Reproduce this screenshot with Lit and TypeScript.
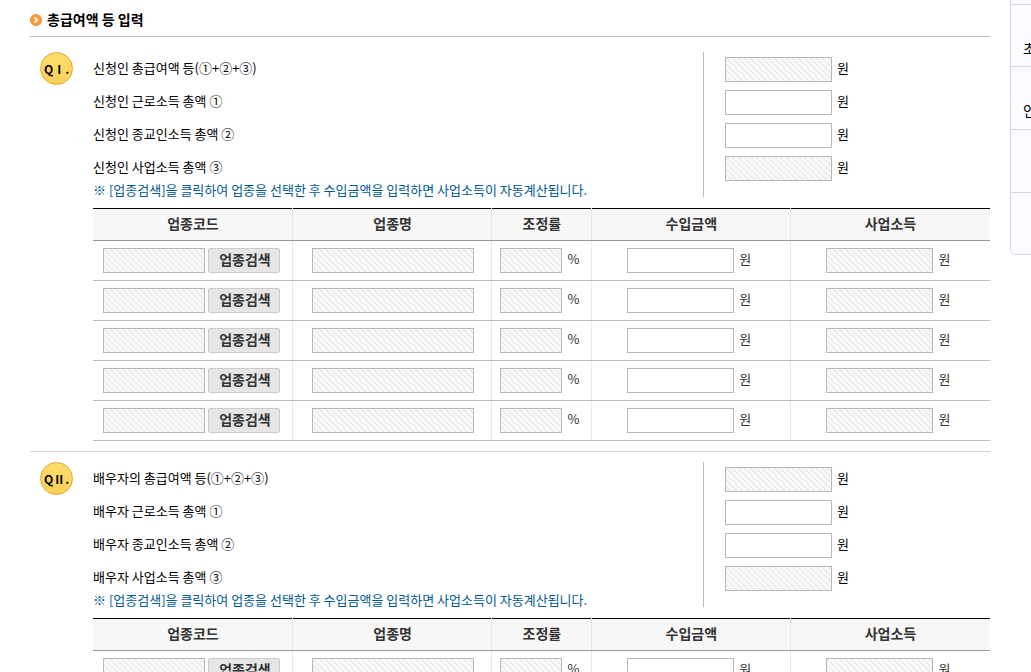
import { LitElement, html, css } from "lit";
import { customElement, property } from "lit/decorators.js";

const FIELDS = [
  { key: "total", suffix: "총급여액 등(①+②+③)", locked: true },
  { key: "wage", suffix: "근로소득 총액 ①", locked: false },
  { key: "clergy", suffix: "종교인소득 총액 ②", locked: false },
  { key: "business", suffix: "사업소득 총액 ③", locked: true },
];

const COLUMNS = [
  { name: "업종코드", cls: "first" },
  { name: "업종명", cls: "wide" },
  { name: "조정률", cls: "narrow" },
  { name: "수입금액", cls: "wide" },
  { name: "사업소득", cls: "last" },
];

@customElement("income-section")
export class IncomeSection extends LitElement {
  @property() mark = "";
  @property() who = "";
  @property() whoTotal = "";

  static styles = css`
    :host {
      display: grid;
      grid-template-columns: 33px minmax(0, 1fr);
      column-gap: 20px;
      padding: 10px 0 10px 10px;
      border-bottom: 1px solid #d4d4d4;
    }
    * { box-sizing: border-box; }
    .badge {
      display: flex;
      align-items: center;
      justify-content: center;
      width: 33px;
      height: 33px;
      border: 1px solid #dba92f;
      border-radius: 50%;
      background: linear-gradient(#ffdd6c, #fad057);
      font-size: 12px;
      font-weight: 700;
      color: #000;
      white-space: nowrap;
    }
    .summary {
      display: grid;
      grid-template-columns: 68% 32%;
      margin-bottom: 11px;
    }
    .labels label { display: block; padding-bottom: 2px; line-height: 31px; color: #000; }
    .note { margin: 0; line-height: 12px; height: 12px; color: #005a92; }
    .values { border-left: 1px solid #bbb; padding: 1px 0 12px 21px; }
    .value { display: flex; align-items: center; gap: 5px; height: 33px; color: #000; }
    input {
      height: 25px;
      margin: 0;
      padding: 0 5px;
      border: 1px solid #b8b8b8;
      border-radius: 0;
      background: #fff;
      font: inherit;
      text-align: right;
    }
    input[readonly] {
      background: linear-gradient(45deg, transparent 45%, #e2e2e2 45% 55%, transparent 55%) 0 0 / 6px 6px #f8f8f8;
    }
    .money { width: 107px; }
    .code { width: 102px; }
    .trade { width: 162px; }
    .rate { width: 62px; }
    .unit { padding-bottom: 3px; }
    .cell .unit { width: 16px; }
    table { width: 100%; table-layout: fixed; border-collapse: separate; border-spacing: 0; color: #333; }
    th, td { padding: 0; }
    th {
      height: 33px;
      padding-bottom: 3px;
      border-bottom: 1px solid #999;
      background:
        linear-gradient(#e9e9e9, #e9e9e9) right / 1px 100% no-repeat,
        linear-gradient(#000, #000) top / 100% 1px no-repeat,
        #f7f7f7;
      font-size: 14px;
      line-height: 20px;
      font-weight: 700;
    }
    th:last-child { background: linear-gradient(#000, #000) top / 100% 1px no-repeat, #f7f7f7; }
    td {
      height: 40px;
      border-bottom: 1px solid #bbb;
      background: linear-gradient(#e9e9e9, #e9e9e9) right / 1px 100% no-repeat;
    }
    td:last-child { background: none; }
    .first { width: 22.3%; }
    .wide { width: 22.2%; }
    .narrow { width: 11.1%; }
    .cell { display: flex; align-items: center; justify-content: center; gap: 5px; }
    .search { justify-content: flex-start; gap: 3px; padding-left: 10px; }
    button {
      width: 72px;
      height: 25px;
      padding: 0 0 3px 2px;
      border: 1px solid #ccc;
      border-radius: 2px;
      background: #e6e6e6;
      color: #333;
      font: inherit;
      font-size: 14px;
      font-weight: 700;
      line-height: 20px;
      white-space: nowrap;
    }
  `;

  render() {
    return html`
      <div class="badge">${this.mark}</div>
      <div>
        <div class="summary">
          <div class="labels">
            ${FIELDS.map((f) => html`<label for=${f.key}>${f.key === "total" ? this.whoTotal : this.who} ${f.suffix}</label>`)}
            <p class="note">※ [업종검색]을 클릭하여 업종을 선택한 후 수입금액을 입력하면 사업소득이 자동계산됩니다.</p>
          </div>
          <div class="values">
            ${FIELDS.map((f) => html`<div class="value"><input id=${f.key} class="money" ?readonly=${f.locked} /><span class="unit">원</span></div>`)}
          </div>
        </div>
        <table>
          <thead>
            <tr>${COLUMNS.map((c) => html`<th class=${c.cls} scope="col">${c.name}</th>`)}</tr>
          </thead>
          <tbody>
            ${[1, 2, 3, 4, 5].map(() => html`
              <tr>
                <td><div class="cell search"><input class="code" aria-label="업종코드" readonly /><button type="button">업종검색</button></div></td>
                <td><div class="cell"><input class="trade" aria-label="업종명" readonly /></div></td>
                <td><div class="cell"><input class="rate" aria-label="조정률" readonly /><span class="unit">%</span></div></td>
                <td><div class="cell"><input class="money" aria-label="수입금액" /><span class="unit">원</span></div></td>
                <td><div class="cell"><input class="money" aria-label="사업소득" readonly /><span class="unit">원</span></div></td>
              </tr>`)}
          </tbody>
        </table>
      </div>
    `;
  }
}

@customElement("app-root")
export class AppRoot extends LitElement {
  static styles = css`
    :host {
      display: grid;
      grid-template-columns: minmax(0, 1fr) 21px;
      align-items: start;
      column-gap: 20px;
      height: 100vh;
      padding-left: 30px;
      box-sizing: border-box;
      overflow-x: hidden;
      overflow-y: auto;
      scrollbar-width: none;
      background: #fff;
      font-family: "Noto Sans CJK KR", sans-serif;
      font-size: 13px;
      line-height: 20px;
    }
    h2 {
      display: flex;
      align-items: center;
      gap: 5px;
      margin: 0 0 5px;
      padding: 7px 0 5px;
      border-bottom: 1px solid #bbb;
      font-size: 14px;
      line-height: 24px;
      color: #000;
    }
    h2 svg { margin-top: 2px; }
    .quick {
      margin: 0;
      padding: 0;
      list-style: none;
      overflow: hidden;
      border: 1px solid #d8dade;
      border-width: 0 0 1px 1px;
      border-radius: 0 0 0 5px;
      background: #fbfcff;
      color: #000;
      white-space: nowrap;
    }
    .quick li {
      height: 62px;
      border-top: 1px solid #d8dade;
      box-sizing: content-box;
      padding-left: 12px;
      font-size: 14px;
      line-height: 86px;
    }
    .quick li:first-child { height: 4px; border-top: 0; }
    .quick li:nth-child(2) { height: 61px; }
    .quick li:last-child { height: 61px; }
  `;

  render() {
    return html`
      <main>
        <h2>
          <svg width="12" height="12" viewBox="0 0 12 12" aria-hidden="true">
            <circle cx="6" cy="6" r="5.5" fill="#fa9f33" stroke="#f28c3a" />
            <path d="M4.5 3.3 7.3 6 4.5 8.7" fill="none" stroke="#fff" stroke-width="1.6" />
          </svg>
          총급여액 등 입력
        </h2>
        <income-section mark="QⅠ." who="신청인" whoTotal="신청인"></income-section>
        <income-section mark="QⅡ." who="배우자" whoTotal="배우자의"></income-section>
      </main>
      <ul class="quick">
        <li></li>
        <li>초</li>
        <li>인</li>
        <li></li>
        <li></li>
      </ul>
    `;
  }
}
